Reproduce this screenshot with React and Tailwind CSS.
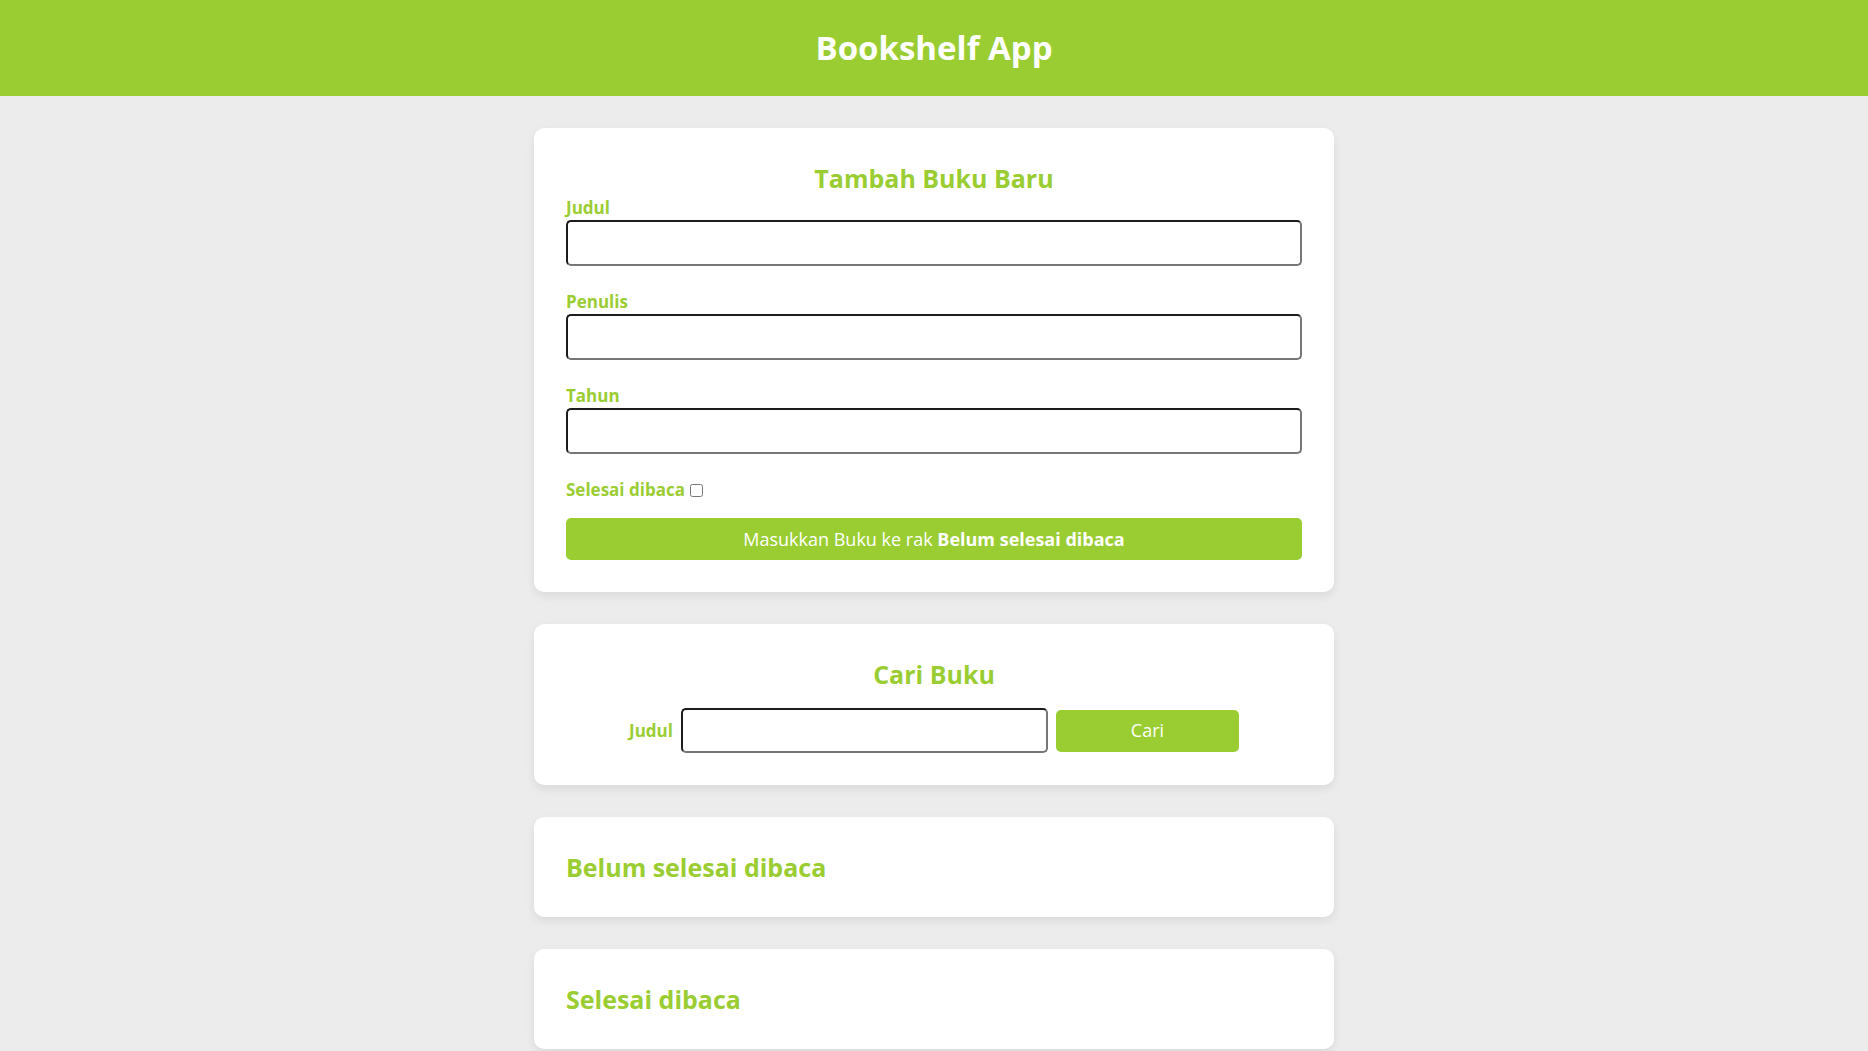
import { useState } from 'react';

const font = { fontFamily: '"Open Sans", "Liberation Sans", sans-serif' };

const Field = ({ id, label, value, onChange }) => (
    <div className="flex flex-col">
        <label htmlFor={id} className="text-[17px] leading-6 font-bold text-[#9acd32]">
            {label}
        </label>
        <input
            id={id}
            value={value}
            onChange={(e) => onChange(e.target.value)}
            className="h-[46px] w-full rounded-[5px] border-2 border-t-[#1c1c1c] border-l-[#1c1c1c] border-b-[#767676] border-r-[#767676] bg-white px-2 outline-none"
        />
    </div>
);

const Card = ({ children, className = '' }) => (
    <section className={`rounded-[10px] bg-white p-8 shadow-[0_4px_10px_rgba(0,0,0,0.08)] ${className}`}>
        {children}
    </section>
);

const App = () => {
    const [title, setTitle] = useState('');
    const [author, setAuthor] = useState('');
    const [year, setYear] = useState('');
    const [done, setDone] = useState(false);
    const [query, setQuery] = useState('');

    return (
        <div className="min-h-screen bg-[#ececec]" style={font}>
            {/* Header */}
            <header className="flex h-24 items-center justify-center bg-[#9acd32]">
                <h1 className="text-[33px] font-bold text-white">Bookshelf App</h1>
            </header>

            <main className="mx-auto flex w-[800px] flex-col gap-8 pt-8">
                {/* Tambah buku */}
                <Card>
                    <h2 className="text-center text-[25px] leading-9 font-bold text-[#9acd32]">Tambah Buku Baru</h2>
                    <div className="flex flex-col gap-6">
                        <Field id="judul" label="Judul" value={title} onChange={setTitle} />
                        <Field id="penulis" label="Penulis" value={author} onChange={setAuthor} />
                        <Field id="tahun" label="Tahun" value={year} onChange={setYear} />
                        <div className="flex h-6 items-center gap-[5px]">
                            <label htmlFor="selesai" className="text-[17px] font-bold text-[#9acd32]">
                                Selesai dibaca
                            </label>
                            <input
                                id="selesai"
                                type="checkbox"
                                checked={done}
                                onChange={(e) => setDone(e.target.checked)}
                                className="h-[13px] w-[13px]"
                            />
                        </div>
                    </div>
                    <button className="mt-4 h-[42px] w-full rounded-[5px] bg-[#9acd32] text-[18px] text-white">
                        Masukkan Buku ke rak <b>{done ? 'Selesai dibaca' : 'Belum selesai dibaca'}</b>
                    </button>
                </Card>

                {/* Cari buku */}
                <Card>
                    <h2 className="text-center text-[25px] leading-9 font-bold text-[#9acd32]">Cari Buku</h2>
                    <div className="mt-4 flex items-center justify-center gap-2">
                        <label htmlFor="cari" className="text-[17px] font-bold text-[#9acd32]">
                            Judul
                        </label>
                        <input
                            id="cari"
                            value={query}
                            onChange={(e) => setQuery(e.target.value)}
                            className="h-[45px] w-[367px] rounded-[5px] border-2 border-t-[#1c1c1c] border-l-[#1c1c1c] border-b-[#767676] border-r-[#767676] bg-white px-2 outline-none"
                        />
                        <button className="h-[42px] w-[183px] rounded-[5px] bg-[#9acd32] text-[18px] text-white">Cari</button>
                    </div>
                </Card>

                <Card>
                    <h2 className="text-[25px] leading-9 font-bold text-[#9acd32]">Belum selesai dibaca</h2>
                </Card>

                <Card>
                    <h2 className="text-[25px] leading-9 font-bold text-[#9acd32]">Selesai dibaca</h2>
                </Card>
            </main>
        </div>
    );
};

export default App;
